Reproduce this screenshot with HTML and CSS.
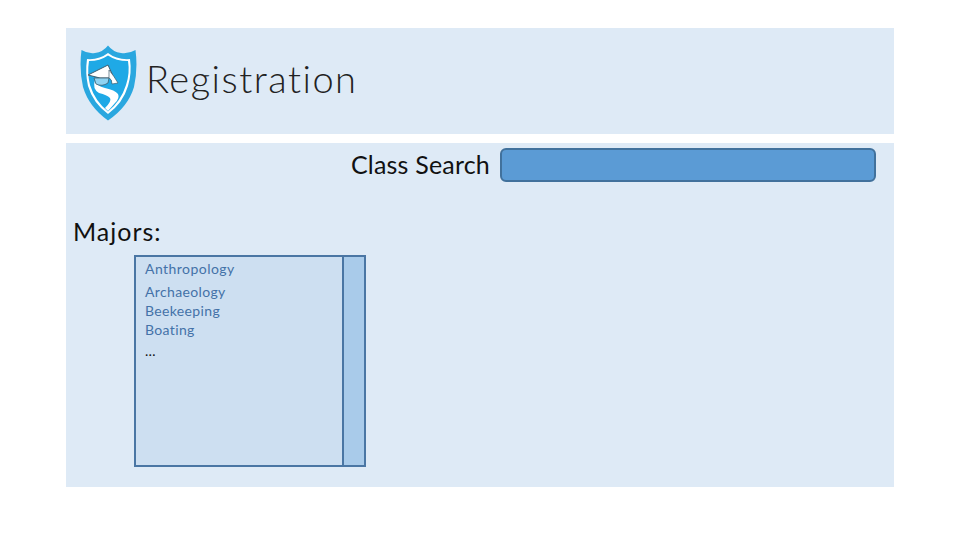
FILE: index.html
```html
<!DOCTYPE html>
<html lang="en">
<head>
<meta charset="utf-8">
<title>Registration</title>
<link rel="stylesheet" href="styles.css">
</head>
<body>
<main class="slide">
  <header class="banner">
    <svg class="logo" viewBox="0 0 58 76" width="58" height="76" aria-hidden="true">
      <path d="M1.5 5 Q8 9 15 8 Q23 7 28 .5 Q33 7 41 8 Q49 9 55.5 5 Q58 24 54 42 Q48 62 28 75.5 Q9 62 3 42 Q-1 24 1.500 5Z" fill="#2aa7df"/>
      <path d="M7 14 Q19 15 28 8 Q37 15 50 14 Q52 28 48 41 Q43 58 28 69 Q13 58 8 41 Q5 28 7 14Z" fill="#fff"/>
      <path d="M9 16 Q20 16 28 10.500 Q36 16 48 16 Q50 28 46 40 Q41 56 28 66.500 Q15 56 10 40 Q7 28 9 16Z" fill="#1fa9e6"/>
      <path d="M15 35 Q16 41 25 43 Q35 45 38 49 Q40 53 35 58 L28 66 L25 63 Q32 56 30 53 Q27 50 19 48 Q12 44 15 35Z" fill="#fff"/>
      <path d="M8 30 L28 20 L34 33 L20 33Z" fill="#fff" stroke="#3f5f70" stroke-width="1"/>
      <path d="M14 33 L16 39 Q22 42 28 38 L29 33Z" fill="#8fd3f2" stroke="#3f5f70" stroke-width=".8"/>
      <path d="M29 25 Q34 31 38 38 L32 39 Q32 34 29 33Z" fill="#fff" stroke="#3f5f70" stroke-width=".7"/>
    </svg>
    <h1 class="title">Registration</h1>
  </header>
  <section class="panel">
    <div class="search">
      <span class="search-label">Class Search</span>
      <div class="search-box"></div>
    </div>
    <h2 class="majors-title">Majors:</h2>
    <div class="listbox">
      <ul class="list">
        <li class="first">Anthropology</li>
        <li>Archaeology</li>
        <li>Beekeeping</li>
        <li>Boating</li>
        <li class="more">…</li>
      </ul>
      <div class="scrollbar"></div>
    </div>
  </section>
</main>
</body>
</html>
```
FILE: styles.css
```css
* { box-sizing: border-box; }
html, body { margin: 0; padding: 0; background: #fff; }
body { width: 960px; height: 540px; overflow: hidden; font-family: "Lato", "Open Sans", sans-serif; color: #111; }
.slide { padding: 28px 66px 0; display: flex; flex-direction: column; gap: 9px; }
.banner { height: 106px; background: #deeaf6; display: flex; align-items: center; padding-left: 14px; }
.logo { flex: none; margin-top: 3px; }
.title { margin: 0 0 6px 8px; font-size: 38px; font-weight: 300; letter-spacing: 1.5px; line-height: 1; color: #222; }
.panel { height: 344px; background: #deeaf6; padding: 5px 18px 0 7px; display: flex; flex-direction: column; }
.search { display: flex; justify-content: flex-end; align-items: center; gap: 10px; height: 34px; }
.search-label { font-size: 25px; line-height: 1; letter-spacing: .2px; margin-top: -2px; }
.search-box { width: 376px; height: 34px; background: #5b9bd5; border: 2px solid #41719c; border-radius: 6px; }
.majors-title { margin: 34px 0 0; font-size: 25px; font-weight: 400; line-height: 30px; letter-spacing: 1px; }
.listbox { margin: 9px 0 0 61px; width: 232px; height: 212px; border: 2px solid #4a76a4; display: flex; background: #cddff1; }
.list { flex: 1; list-style: none; margin: 0; padding: 2px 0 0 9px; font-size: 14px; line-height: 19px; color: #4472a8; letter-spacing: .35px; }
.first { margin-bottom: 4px; letter-spacing: .45px; }
.more { color: #111; padding-top: 2px; }
.scrollbar { width: 22px; background: #a9cbea; border-left: 2px solid #4a76a4; }
```
